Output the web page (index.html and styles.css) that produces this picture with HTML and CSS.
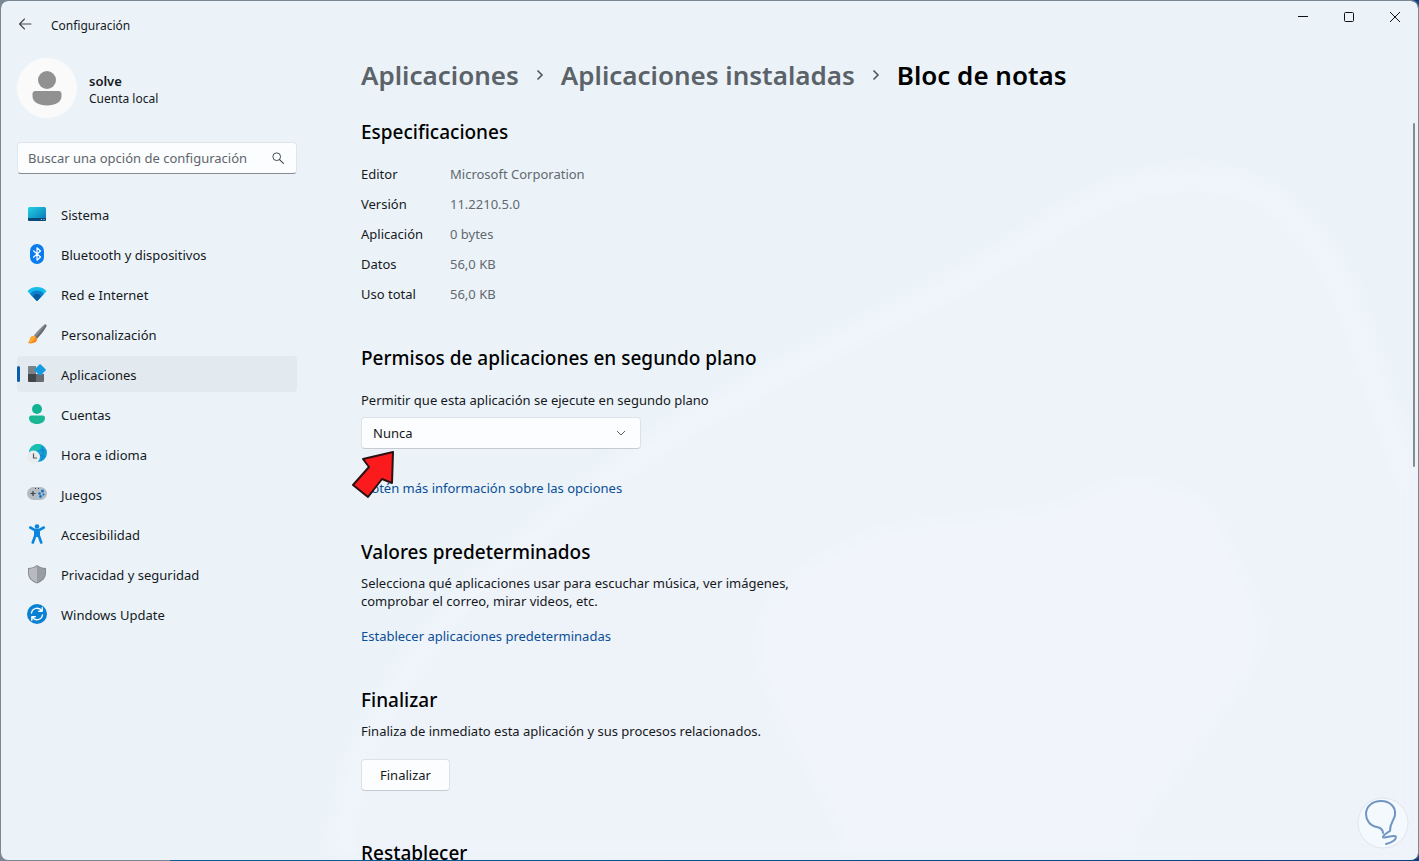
FILE: index.html
```html
<!DOCTYPE html>
<html lang="es">
<head>
    <meta charset="UTF-8">
    <meta name="viewport" content="width=device-width, initial-scale=1.0">
    <title>Configuración</title>
    <link rel="stylesheet" href="styles.css">
</head>

<body>
    <div class="window">
        <!-- ondas suaves del fondo -->
        <svg class="backdrop" viewBox="0 0 1419 861" preserveAspectRatio="none" aria-hidden="true">
            <path d="M340 861c0-180 180-330 350-440 120-70 250-120 360-195 90-60 190-70 250-5 60 60 80 190 119 280v360z" fill="#eef2f9" stroke="#f0f4fb" stroke-width="20"/>
            <path d="M850 861c-20-60-60-110-85-180-30-80 40-120 110-150 90-20 180-10 230-47 70-10 110 10 125 60 20 50 50 80 20 130-40 60-90 120-130 187z" fill="#f1f4fb"/>
        </svg>

        <!-- barra de título -->
        <header class="titlebar">
            <button class="back" type="button" aria-label="Atrás">
                <svg width="14" height="12" viewBox="0 0 14 12"><path d="M13 6H1.5M6.5 1L1.5 6l5 5" fill="none" stroke="#44494e" stroke-width="1.1" stroke-linecap="round" stroke-linejoin="round"/></svg>
            </button>
            <span class="title">Configuración</span>
            <div class="controls">
                <button type="button" aria-label="Minimizar">
                    <svg width="12" height="12" viewBox="0 0 12 12"><path d="M1 5.5h10" stroke="#111" fill="none"/></svg>
                </button>
                <button type="button" aria-label="Maximizar">
                    <svg width="12" height="12" viewBox="0 0 12 12"><rect x="1.5" y="1.5" width="9" height="9" rx="1" stroke="#111" fill="none"/></svg>
                </button>
                <button type="button" aria-label="Cerrar">
                    <svg width="12" height="12" viewBox="0 0 12 12"><path d="M1 1l10 10M11 1L1 11" stroke="#111" fill="none"/></svg>
                </button>
            </div>
        </header>

        <div class="layout">
            <aside class="sidebar">
                <div class="profile">
                    <svg class="avatar" width="60" height="60" viewBox="0 0 60 60">
                        <circle cx="30" cy="30" r="30" fill="#fafafa"/>
                        <circle cx="30" cy="22" r="9" fill="#919191"/>
                        <path d="M18.500 33h23a3 3 0 0 1 3 3v2c0 6-6 9.500-14.500 9.500S15.500 44 15.500 38v-2a3 3 0 0 1 3-3z" fill="#919191"/>
                    </svg>
                    <div class="user">
                        <div class="name">solve</div>
                        <div class="account">Cuenta local</div>
                    </div>
                </div>

                <form class="search">
                    <input type="search" placeholder="Buscar una opción de configuración" aria-label="Buscar una opción de configuración">
                    <svg width="12" height="12" viewBox="0 0 14 14"><circle cx="5.5" cy="5.500" r="4.500" fill="none" stroke="#3c4248" stroke-width="1.1"/><path d="M8.800 8.800l4.500 4.500" stroke="#3c4248" stroke-width="1.2" stroke-linecap="round"/></svg>
                </form>

                <nav class="nav">
                    <a href="#">
                        <svg width="20" height="20" viewBox="0 0 20 20">
                            <defs><linearGradient id="sys" x1="0" y1="0" x2="1" y2="1"><stop offset="0" stop-color="#1fd3e0"/><stop offset="1" stop-color="#0a72b8"/></linearGradient></defs>
                            <rect x="1" y="3" width="18" height="14" rx="1.5" fill="url(#sys)"/>
                            <path d="M1 14h18v1.500a1.500 1.500 0 0 1-1.500 1.500h-15A1.500 1.500 0 0 1 1 15.500z" fill="#0b4a78"/>
                            <path d="M14 15.500h1M16.500 15.500h1" stroke="#9fe0f5"/>
                        </svg>
                        <span>Sistema</span>
                    </a>
                    <a href="#">
                        <svg width="20" height="20" viewBox="0 0 20 20">
                            <rect x="3" y="0" width="14" height="20" rx="7" fill="#0a7cf0"/>
                            <path d="M6.500 6.800l7 6.200-3.500 3.200V3.800l3.500 3.200-7 6.200" fill="none" stroke="#fff" stroke-width="1.2" stroke-linejoin="round" stroke-linecap="round"/>
                        </svg>
                        <span>Bluetooth y dispositivos</span>
                    </a>
                    <a href="#">
                        <svg width="20" height="20" viewBox="0 0 20 20">
                            <path d="M10 3c4 0 7.500 1.600 9.500 4.200L10.700 16.600a1 1 0 0 1-1.400 0L.500 7.200C2.500 4.600 6 3 10 3z" fill="#16bdea"/>
                            <path d="M10 6.500c3 0 5.300 1 6.900 3.500L10.700 16.600a1 1 0 0 1-1.400 0L3.100 10C4.700 7.500 7 6.500 10 6.500z" fill="#0c80cc"/>
                            <path d="M10 10c1.800 0 3.200.600 4.200 2.300l-3.500 4.300a1 1 0 0 1-1.400 0l-3.500-4.300C6.800 10.600 8.200 10 10 10z" fill="#0b5aa0"/>
                        </svg>
                        <span>Red e Internet</span>
                    </a>
                    <a href="#">
                        <svg width="20" height="20" viewBox="0 0 20 20">
                            <path d="M18.900.500c.700.600.700 1.300.200 2.200-2.600 4.400-5.600 8.200-9 11.800L6.700 11.700C9.900 7.800 13.400 4 17.200.700c.600-.500 1.200-.600 1.700-.200z" fill="#858b90"/>
                            <path d="M18.900.500c.700.600.700 1.300.200 2.200-2.600 4.400-5.600 8.200-9 11.800l-1.500-1.300z" fill="#686d72"/>
                            <path d="M6.300 12c2 0 3.800 1.400 3.800 3.300 0 3.500-5.600 5-9.500 3.500 1.800-.700 2-1.800 2.300-3.500.3-2 1.600-3.300 3.400-3.300z" fill="#f9871d"/>
                            <path d="M6.300 12c-1.800 0-3.100 1.300-3.400 3.300-.3 1.700-.5 2.800-2.300 3.500 4.500.200 7-2.300 7.700-6.200z" fill="#fdac33"/>
                        </svg>
                        <span>Personalización</span>
                    </a>
                    <a href="#" class="active" aria-current="page">
                        <svg width="20" height="20" viewBox="0 0 20 20">
                            <path d="M2 2h7v8H1V3a1 1 0 0 1 1-1z" fill="#7c8288"/>
                            <path d="M1 10h8v8H2a1 1 0 0 1-1-1z" fill="#41464b"/>
                            <path d="M9 10h8v7a1 1 0 0 1-1 1H9z" fill="#666c72"/>
                            <path d="M13.800.500l4.700 4.700a1 1 0 0 1 0 1.400l-4.700 4.700a1 1 0 0 1-1.400 0L7.700 6.600a1 1 0 0 1 0-1.400L12.400.500a1 1 0 0 1 1.400 0z" fill="#149be0"/>
                        </svg>
                        <span>Aplicaciones</span>
                    </a>
                    <a href="#">
                        <svg width="20" height="20" viewBox="0 0 20 20">
                            <circle cx="10" cy="5" r="5" fill="#12b394"/>
                            <path d="M4.500 11.500h11A2.500 2.500 0 0 1 18 14c0 3.800-3.400 6-8 6s-8-2.200-8-6a2.500 2.500 0 0 1 2.500-2.500z" fill="#1bb795"/>
                        </svg>
                        <span>Cuentas</span>
                    </a>
                    <a href="#">
                        <svg width="20" height="20" viewBox="0 0 20 20">
                            <circle cx="11" cy="9" r="9" fill="#139fd5"/>
                            <path d="M2.600 6a9 9 0 0 1 13-4.800c-1 3-3 5-6 5.500L3 9z" fill="#19bfb0"/>
                            <path d="M13 6l6 1M12 11l7 2M14 2c3 5 3 10 0 15" stroke="#0a78bd" stroke-width=".6" fill="none"/>
                            <circle cx="6.500" cy="13" r="6.500" fill="#e9ecef"/>
                            <path d="M6.500 9.500V14h3.500" fill="none" stroke="#4e565e" stroke-width="1.200"/>
                        </svg>
                        <span>Hora e idioma</span>
                    </a>
                    <a href="#">
                        <svg width="20" height="20" viewBox="0 0 20 20">
                            <rect x="0" y="3" width="20" height="13" rx="6.500" fill="#b4bcc4"/>
                            <path d="M3.500 9.500h5M6 7v5" stroke="#3b4148" stroke-width="1.200"/>
                            <path d="M8 4.500h1M11 4.500h1" stroke="#3b4148"/>
                            <g fill="#1473c4"><circle cx="15.500" cy="7" r="1.500"/><circle cx="12.500" cy="9.500" r="1.300"/><circle cx="16.500" cy="10.500" r="1.100"/><circle cx="13.500" cy="12.500" r="1.400"/></g>
                        </svg>
                        <span>Juegos</span>
                    </a>
                    <a href="#">
                        <svg width="20" height="20" viewBox="0 0 20 20">
                            <circle cx="10" cy="2.500" r="2.300" fill="#0a84dc"/>
                            <path d="M3.200 3.500l4.300 2.300c1.600.700 3.400.700 5 0l4.300-2.300M8.300 6.500v5L5.800 18.500M11.700 6.500v5l2.500 7" fill="none" stroke="#0a84dc" stroke-width="2.600" stroke-linecap="round" stroke-linejoin="round"/>
                            <path d="M8 6h4v7H8z" fill="#0a84dc"/>
                        </svg>
                        <span>Accesibilidad</span>
                    </a>
                    <a href="#">
                        <svg width="20" height="20" viewBox="0 0 20 20">
                            <path d="M10 1c2.500 2 5.500 2.800 9 3v5c0 5-3.500 8.500-9 10.500C4.500 17.500 1 14 1 9V4c3.500-.2 6.500-1 9-3z" fill="#868b90"/>
                            <path d="M10 2.300c2.300 1.700 4.900 2.400 8 2.600V9c0 4.500-3.200 7.600-8 9.500z" fill="#989da2"/>
                            <path d="M10 2.300C7.700 4 5.100 4.700 2 4.900V9c0 4.500 3.200 7.600 8 9.500z" fill="#b7bbbf"/>
                        </svg>
                        <span>Privacidad y seguridad</span>
                    </a>
                    <a href="#">
                        <svg width="20" height="20" viewBox="0 0 20 20">
                            <circle cx="10" cy="10" r="10" fill="#0a80d4"/>
                            <path d="M4.500 9A5.600 5.600 0 0 1 14.800 7M15.500 11A5.600 5.600 0 0 1 5.200 13M15.200 3.800V7.300H11.700M4.800 16.200V12.700H8.300" fill="none" stroke="#fff" stroke-width="1.400" stroke-linecap="round" stroke-linejoin="round"/>
                        </svg>
                        <span>Windows Update</span>
                    </a>
                </nav>
            </aside>

            <main class="content">
                <h1 class="breadcrumb">
                    <a href="#">Aplicaciones</a>
                    <svg width="8" height="12" viewBox="0 0 8 12"><path d="M1.500 1.500L6 6l-4.500 4.500" fill="none" stroke="#50565c" stroke-width="1.600"/></svg>
                    <a href="#">Aplicaciones instaladas</a>
                    <svg width="8" height="12" viewBox="0 0 8 12"><path d="M1.500 1.500L6 6l-4.500 4.500" fill="none" stroke="#50565c" stroke-width="1.600"/></svg>
                    <span>Bloc de notas</span>
                </h1>

                <section class="about">
                    <h2>Especificaciones</h2>
                    <table class="specs">
                        <tr><th scope="row">Editor</th><td>Microsoft Corporation</td></tr>
                        <tr><th scope="row">Versión</th><td>11.2210.5.0</td></tr>
                        <tr><th scope="row">Aplicación</th><td>0 bytes</td></tr>
                        <tr><th scope="row">Datos</th><td>56,0 KB</td></tr>
                        <tr><th scope="row">Uso total</th><td>56,0 KB</td></tr>
                    </table>
                </section>

                <section>
                    <h2>Permisos de aplicaciones en segundo plano</h2>
                    <label for="background">Permitir que esta aplicación se ejecute en segundo plano</label>
                    <div class="dropdown">
                        <select id="background">
                            <option>Nunca</option>
                        </select>
                        <svg class="chevron" width="10" height="6" viewBox="0 0 10 6"><path d="M1 1l4 4 4-4" fill="none" stroke="#5a6066"/></svg>
                        <!-- flecha roja que señala la lista -->
                        <svg class="pointer" width="46" height="50" viewBox="0 0 46 50"><path d="M42 2L12 9l6 8L2 35l15 12 14-18 10 4z" fill="#fb1a1c" stroke="#2a1214" stroke-width="2" stroke-linejoin="round"/></svg>
                    </div>
                    <a class="link more" href="#">Obtén más información sobre las opciones</a>
                </section>

                <section>
                    <h2>Valores predeterminados</h2>
                    <p>Selecciona qué aplicaciones usar para escuchar música, ver imágenes, comprobar el correo, mirar videos, etc.</p>
                    <a class="link" href="#">Establecer aplicaciones predeterminadas</a>
                </section>

                <section>
                    <h2>Finalizar</h2>
                    <p>Finaliza de inmediato esta aplicación y sus procesos relacionados.</p>
                    <button class="btn" type="button">Finalizar</button>
                </section>

                <section class="last">
                    <h2>Restablecer</h2>
                </section>
            </main>
        </div>

        <div class="scrollbar"></div>
        <svg class="watermark" width="52" height="52" viewBox="0 0 52 52">
            <circle cx="26" cy="26" r="25" fill="#f4f9fe" stroke="#dfe4ee"/>
            <path d="M26 36c0-3-2-5-6-6C13 29 9 23 9 17 9 9 16 4 24 4c9 0 15 6 14 14-1 6-5 7-5 16-3 2-7 4-7 6s13-3 13 0-5 6-10 7" fill="none" stroke="#7195c2" stroke-width="2" stroke-linecap="round" stroke-linejoin="round"/>
        </svg>
    </div>
</body>
</html>
```
FILE: styles.css
```css
* {
    box-sizing: border-box;
}

body {
    margin: 0;
    height: 100vh;
    overflow: hidden;
    background: linear-gradient(90deg, #7b8894 12%, #0b5f9c 12%, #0a3f80);
    font-family: "Noto Sans", "Open Sans", sans-serif;
    font-size: 13px;
    line-height: 18px;
    color: #16191c;
}

button, input, select {
    font: inherit;
    color: inherit;
}

a {
    color: inherit;
    text-decoration: none;
}

svg {
    flex: none;
}

.window {
    position: relative;
    z-index: 0;
    height: 100vh;
    border: 1px solid #7b8894;
    border-bottom-color: transparent;
    border-radius: 8px;
    overflow: hidden;
    background: #ebf3f9 padding-box;
}

.backdrop {
    position: absolute;
    inset: 0;
    z-index: -1;
    width: 100%;
    height: 100%;
    filter: blur(8px);
}

/* barra de título */
.titlebar {
    display: flex;
    height: 48px;
    padding-left: 16px;
}

.back {
    width: 16px;
    padding: 0;
    border: 0;
    background: none;
}

.title {
    margin-left: 18px;
    font-size: 12px;
    line-height: 50px;
}

.controls {
    display: flex;
    margin-left: auto;
}

.controls button {
    display: flex;
    align-items: center;
    justify-content: center;
    width: 46px;
    height: 32px;
    padding: 0;
    border: 0;
    background: none;
}

.layout {
    display: flex;
    gap: 64px;
    padding-left: 16px;
}

/* panel izquierdo */
.sidebar {
    flex: 0 0 280px;
    padding-top: 9px;
}

.profile {
    display: flex;
    align-items: center;
    gap: 12px;
}

.user {
    padding-top: 4px;
}

.name {
    font-weight: 600;
}

.account {
    font-size: 12px;
}

.search {
    display: flex;
    align-items: center;
    height: 32px;
    margin: 24px 0 22px;
    padding: 0 12px 0 10px;
    border: 1px solid #dfe5ea;
    border-bottom-color: #858b90;
    border-radius: 4px;
    background: #fbfdfe;
}

.search input {
    flex: 1;
    min-width: 0;
    padding: 0;
    border: 0;
    outline: 0;
    background: none;
}

.search input::placeholder {
    color: #5f656b;
    opacity: 1;
}

.nav {
    display: flex;
    flex-direction: column;
    gap: 4px;
}

.nav a {
    display: flex;
    align-items: center;
    gap: 14px;
    height: 36px;
    padding-left: 10px;
    border-radius: 4px;
}

.nav span {
    padding-top: 2px;
}

.nav .active {
    position: relative;
    background: #e2e9ef;
}

.nav .active::before {
    content: "";
    position: absolute;
    left: 0;
    top: 10px;
    width: 3px;
    height: 16px;
    border-radius: 2px;
    background: #0a5cad;
}

/* contenido */
.content {
    flex: 1;
}

.breadcrumb {
    display: flex;
    align-items: center;
    gap: 17px;
    margin: 7px 0 24px;
    font-size: 26px;
    font-weight: 600;
    line-height: 38px;
    color: #000;
}

.breadcrumb a {
    color: #5b6268;
}

section {
    margin-bottom: 41px;
}

.about {
    margin-bottom: 35px;
}

h2 {
    margin: 0;
    font-size: 19px;
    font-weight: 500;
    line-height: 28px;
    color: #000;
}

p {
    max-width: 440px;
    margin: 8px 0 17px;
}

.specs {
    margin-top: 13px;
    border-collapse: collapse;
}

.specs th,
.specs td {
    height: 30px;
    padding: 0;
    text-align: left;
    font-weight: 400;
}

.specs th {
    width: 89px;
}

.specs td {
    color: #62696f;
}

label {
    display: block;
    margin: 19px 0 8px;
}

.dropdown {
    position: relative;
    width: 280px;
}

.dropdown select {
    display: block;
    appearance: none;
    width: 100%;
    height: 32px;
    padding: 0 11px;
    border: 1px solid #dde2e8;
    border-bottom-color: #c6cbd1;
    border-radius: 4px;
    background: #fcfdfe;
}

.chevron {
    position: absolute;
    right: 15px;
    top: 13px;
}

.pointer {
    position: absolute;
    left: -10px;
    top: 33px;
}

.link {
    display: block;
    color: #0a4f96;
}

.more {
    margin-top: 30px;
}

.btn {
    display: block;
    height: 32px;
    margin-top: 19px;
    padding: 0 18px;
    border: 1px solid #dde2e8;
    border-bottom-color: #c6cbd1;
    border-radius: 4px;
    background: #fcfdfe;
}

.last {
    margin-top: 48px;
}

.scrollbar {
    position: absolute;
    right: 3px;
    top: 122px;
    width: 2px;
    height: 40%;
    border-radius: 1px;
    background: #858b91;
}

.watermark {
    position: absolute;
    right: 9px;
    bottom: 11px;
}
```
